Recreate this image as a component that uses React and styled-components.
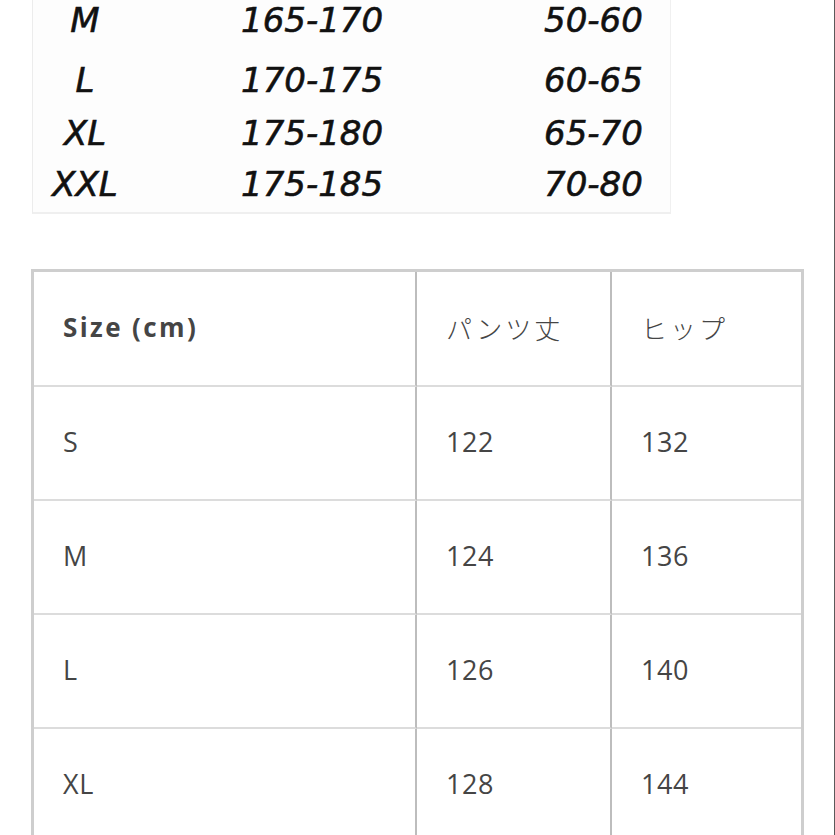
import React from "react";
import styled, { createGlobalStyle } from "styled-components";

const GlobalStyle = createGlobalStyle`
  html, body {
    margin: 0;
    padding: 0;
    background: #ffffff;
  }
`;

const Page = styled.div`
  box-sizing: border-box;
  width: 835px;
  height: 835px;
  overflow: hidden;
  background: #ffffff;
  border-right: 1px solid #5a5a5a;
  padding-left: 31px;
`;

const PhotoChart = styled.div`
  box-sizing: border-box;
  width: 639px;
  margin-top: -10px;
  margin-left: 1px;
  background: #fdfdfd;
  border-left: 1px solid #ececec;
  border-bottom: 2px solid #efefef;
  border-right: 1px solid #f0f0f0;
`;

const PhotoRow = styled.div`
  display: grid;
  grid-template-columns: 104px 407px 1fr;
  align-items: center;
  height: ${(props) => props.h}px;
  font-family: "DejaVu Sans", sans-serif;
  font-style: italic;
  font-size: 34px;
  color: #111111;
  -webkit-text-stroke: 0.6px #111111;
`;

const PhotoCell = styled.div`
  text-align: ${(props) => (props.center ? "center" : "left")};
  padding-left: ${(props) => props.pad || 0}px;
  white-space: nowrap;
`;

const Table = styled.div`
  display: grid;
  grid-template-columns: 383px 195px 189px;
  width: 767px;
  margin-top: 55px;
  border: 3px solid #cecece;
  border-bottom: none;
  background: #ffffff;
`;

const Cell = styled.div`
  box-sizing: border-box;
  height: ${(props) => (props.head ? 115 : 114)}px;
  display: flex;
  align-items: center;
  padding-left: 29px;
  padding-bottom: 3px;
  border-bottom: 2px solid #dcdcdc;
  border-right: ${(props) => (props.last ? "none" : "2px solid #bdbdbd")};
  color: #454545;
  font-family: ${(props) =>
    props.jp
      ? `"Noto Sans CJK JP", "Noto Sans", sans-serif`
      : `"Open Sans", "Noto Sans", sans-serif`};
  font-size: ${(props) => (props.head ? 26 : 27)}px;
  font-weight: ${(props) => (props.bold ? 700 : props.jp ? 300 : 400)};
  letter-spacing: ${(props) => (props.bold ? 2.4 : props.jp ? 3 : 0.6)}px;
  white-space: nowrap;
`;

const photoRows = [
  { size: "M", height: "165-170", weight: "50-60", h: 60 },
  { size: "L", height: "170-175", weight: "60-65", h: 60 },
  { size: "XL", height: "175-180", weight: "65-70", h: 46 },
  { size: "XXL", height: "175-185", weight: "70-80", h: 56 },
];

const sizes = [
  ["S", "122", "132"],
  ["M", "124", "136"],
  ["L", "126", "140"],
  ["XL", "128", "144"],
];

function App() {
  return (
    <>
      <GlobalStyle />
      <Page>
        <PhotoChart>
          {photoRows.map((r) => (
            <PhotoRow key={r.size} h={r.h}>
              <PhotoCell center>{r.size}</PhotoCell>
              <PhotoCell pad={104}>{r.height}</PhotoCell>
              <PhotoCell>{r.weight}</PhotoCell>
            </PhotoRow>
          ))}
        </PhotoChart>

        <Table>
          <Cell head bold>Size (cm)</Cell>
          <Cell head jp>パンツ丈</Cell>
          <Cell head jp last>ヒップ</Cell>
          {sizes.map((row) => (
            <React.Fragment key={row[0]}>
              <Cell>{row[0]}</Cell>
              <Cell>{row[1]}</Cell>
              <Cell last>{row[2]}</Cell>
            </React.Fragment>
          ))}
        </Table>
      </Page>
    </>
  );
}

export default App;
